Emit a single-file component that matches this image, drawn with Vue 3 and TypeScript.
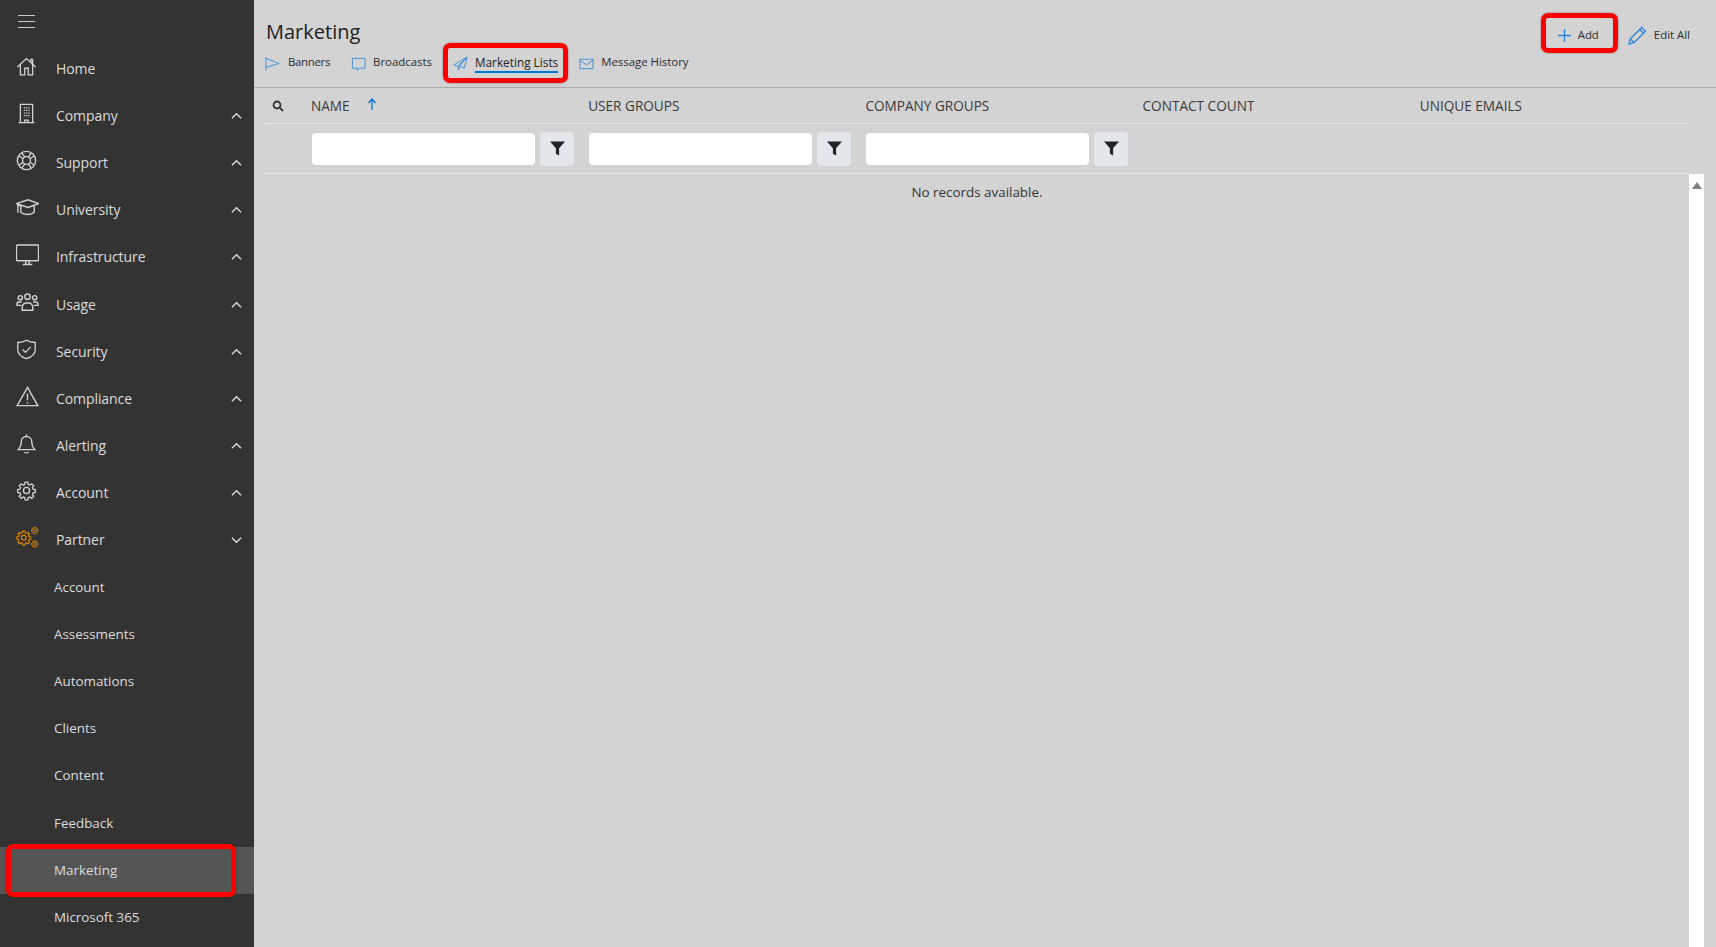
<script setup lang="ts">
interface NavItem {
  label: string
  icon: string
  open?: boolean
}
const nav: NavItem[] = [
  { label: 'Home', icon: 'home' },
  { label: 'Company', icon: 'company', open: false },
  { label: 'Support', icon: 'support', open: false },
  { label: 'University', icon: 'university', open: false },
  { label: 'Infrastructure', icon: 'monitor', open: false },
  { label: 'Usage', icon: 'users', open: false },
  { label: 'Security', icon: 'shield', open: false },
  { label: 'Compliance', icon: 'warning', open: false },
  { label: 'Alerting', icon: 'bell', open: false },
  { label: 'Account', icon: 'gear', open: false },
  { label: 'Partner', icon: 'partner', open: true },
]
const subItems = ['Account', 'Assessments', 'Automations', 'Clients', 'Content', 'Feedback', 'Marketing', 'Microsoft 365']
const columns = ['USER GROUPS', 'COMPANY GROUPS', 'CONTACT COUNT', 'UNIQUE EMAILS']
const gear = 'M10.4 2.5h3.2l.5 2.6 1.7.7 2.2-1.5 2.3 2.3-1.5 2.2.7 1.7 2.6.5v3.2l-2.6.5-.7 1.7 1.5 2.2-2.3 2.3-2.2-1.5-1.7.7-.5 2.6h-3.2l-.5-2.6-1.7-.7-2.2 1.5-2.3-2.3 1.5-2.2-.7-1.7-2.6-.5v-3.2l2.6-.5.7-1.7-1.5-2.2 2.3-2.3 2.2 1.5 1.7-.7z'
</script>

<template>
  <div class="app">
    <aside class="sidebar">
      <div class="burger"><span></span><span></span><span></span></div>
      <div v-for="item in nav" :key="item.label" class="nav-row">
        <span class="nav-icon">
          <svg v-if="item.icon === 'home'" viewBox="0 0 24 24"><path d="M1.500 12.500 12 3l10.500 9.500M5 10v11.500h5V14h4v7.500h5V10M17 7V4h2v4.800" /></svg>
          <svg v-else-if="item.icon === 'company'" viewBox="0 0 24 24"><path d="M5 22.500V1.500h14v21M3 22.500h18M10 22.500v-3h4v3" /><path class="dots" d="M9 5.500h6.500M9 8.500h6.500M9 11.500h6.500M9 14.500h6.500" /></svg>
          <svg v-else-if="item.icon === 'support'" viewBox="0 0 24 24"><circle cx="12" cy="12" r="10.500" /><circle cx="12" cy="12" r="4.500" /><path d="M3.200 6.500 8 10M6.500 3.200 10 8M20.800 6.500 16 10M17.500 3.200 14 8M3.200 17.500 8 14M6.500 20.800 10 16M20.800 17.500 16 14M17.500 20.800 14 16" /></svg>
          <svg v-else-if="item.icon === 'university'" viewBox="0 0 24 24" class="wide"><path d="M.5 8 12.500 4 23.500 8 12.500 12zM5 10.500v6.500c3 3 11 3 14 0v-6.500M2 9v8.500" /></svg>
          <svg v-else-if="item.icon === 'monitor'" viewBox="0 0 24 24" class="wide"><path d="M1.500 2h21a1 1 0 0 1 1 1v14.500a1 1 0 0 1-1 1h-21a1 1 0 0 1-1-1V3a1 1 0 0 1 1-1zM10.500 18.500l-.5 3.500M13.500 18.500l.5 3.500M7 22.500h10" /></svg>
          <svg v-else-if="item.icon === 'users'" viewBox="0 0 24 24" class="wide"><circle cx="12" cy="6" r="2.800" /><circle cx="4.500" cy="7" r="2.200" /><circle cx="19.500" cy="7" r="2.200" /><path d="M6.500 20v-3c0-2.500 2-4.500 4-4.500h3c2 0 4 2 4 4.500v3zM6 11.500H3c-1.200 0-2 1-2 2.500v1h4.500M18 11.500h3c1.200 0 2 1 2 2.500v1h-4.500" /></svg>
          <svg v-else-if="item.icon === 'shield'" viewBox="0 0 24 24"><path d="M12 1.500c3 2 6 2.500 10 2.500v8c0 5-4 8.500-10 10.500C6 20.500 2 17 2 12V4c4 0 7-.5 10-2.500zM7.500 12l3.300 3.300 6-6.300" /></svg>
          <svg v-else-if="item.icon === 'warning'" viewBox="0 0 24 24" class="wide"><path d="M12 2.500 22.800 21.500H1.200zM12 9v7M12 18v1.200" /></svg>
          <svg v-else-if="item.icon === 'bell'" viewBox="0 0 24 24"><path d="M12 1.500v2.500M12 4c-3.500 0-6 2.500-6 6 0 4.500-.5 6-3.500 9h19c-3-3-3.500-4.500-3.500-9 0-3.500-2.500-6-6-6zM9.500 22c1.200 1 3.800 1 5 0" /></svg>
          <svg v-else-if="item.icon === 'gear'" viewBox="0 0 24 24"><path :d="gear" /><circle cx="12" cy="12" r="3.500" /></svg>
          <svg v-else viewBox="0 0 24 24" class="wide orange">
            <g transform="translate(-.5 3.500) scale(.72)"><path :d="gear" /><circle cx="12" cy="12" r="3.500" /></g>
            <g class="tiny" transform="translate(15.500 .5) scale(.34)"><path :d="gear" /><circle cx="12" cy="12" r="3.500" /></g>
            <g class="tiny" transform="translate(15.500 14.500) scale(.34)"><path :d="gear" /><circle cx="12" cy="12" r="3.500" /></g>
          </svg>
        </span>
        <span class="nav-label">{{ item.label }}</span>
        <svg v-if="item.open !== undefined" class="chevron" viewBox="0 0 12 8">
          <path :d="item.open ? 'M1 1.500 6 6.500 11 1.500' : 'M1 6.500 6 1.500 11 6.500'" />
        </svg>
      </div>
      <div
        v-for="sub in subItems"
        :key="'sub-' + sub"
        class="sub-row"
        :class="{ active: sub === 'Marketing' }"
      >
        {{ sub }}
        <span v-if="sub === 'Marketing'" class="callout callout-nav"></span>
      </div>
    </aside>

    <main class="main">
      <header class="head">
        <div class="head-left">
          <h1 class="title">Marketing</h1>
          <nav class="tabs">
            <a class="tab first">
              <svg viewBox="0 0 16 16"><path d="M1 1.500v14M1 2.500l14 5.500-14 4" /></svg>
              <span>Banners</span>
            </a>
            <a class="tab">
              <svg viewBox="0 0 16 16"><path d="M1.500 2.500h13.500v10.500h-6l-2.500 2.200v-2.200H1.500z" /></svg>
              <span>Broadcasts</span>
            </a>
            <a class="tab current">
              <svg viewBox="0 0 16 16"><path d="M15 1 1 9.500l4 1.500zM15 1l-3 12-5-2.500zM15 1 5.500 11v4l2.500-3.800" /></svg>
              <span>Marketing Lists</span>
              <span class="callout callout-tab"></span>
            </a>
            <a class="tab">
              <svg viewBox="0 0 16 16"><path d="M1 3.500h14v10H1zM1 4.500l7 5 7-5" /></svg>
              <span>Message History</span>
            </a>
          </nav>
        </div>
        <div class="actions">
          <button class="action add" type="button">
            <svg viewBox="0 0 14 14"><path d="M7 0v14M0 7h14" /></svg>
            <span>Add</span>
            <span class="callout callout-add"></span>
          </button>
          <button class="action edit" type="button">
            <svg viewBox="0 0 18 18"><path d="M1 17l1.200-4.800L13 1.500l3.500 3.500L5.800 15.800zM2.200 12.200l3.600 3.600M11.200 3.300l3.500 3.500" /></svg>
            <span>Edit All</span>
          </button>
        </div>
      </header>

      <div class="grid">
        <div class="row head-row">
          <span class="search-cell">
            <svg viewBox="0 0 12 12"><circle cx="5" cy="5" r="3.500" /><path d="m7.800 7.800 3.200 3.200" /></svg>
          </span>
          <span class="name-cell">
            NAME
            <svg viewBox="0 0 10 12"><path d="M5 12V1.500M1.500 5 5 1l3.500 4" /></svg>
          </span>
          <span v-for="col in columns" :key="col">{{ col }}</span>
        </div>
        <div class="row filter-row">
          <span></span>
          <span v-for="n in 3" :key="n" class="filter">
            <input type="text" aria-label="filter" />
            <button type="button">
              <svg viewBox="0 0 14 14"><path d="M0 .5h14L8.500 6.700V13.500l-3-1.500V6.700z" /></svg>
            </button>
          </span>
        </div>
        <div class="body">
          <div class="empty">No records available.</div>
          <div class="scrollbar"><i></i></div>
        </div>
      </div>
    </main>
  </div>
</template>

<style scoped>
.app {
  display: flex;
  width: 1716px;
  height: 947px;
  overflow: hidden;
  background: #d3d3d3;
  font-family: "Open Sans", "Noto Sans", sans-serif;
}

.sidebar {
  flex: 0 0 254px;
  height: 947px;
  overflow: hidden;
  background: #333333;
  color: #dcdcdc;
  font-size: 14px;
}

.burger {
  height: 44.500px;
  padding: 15px 0 0 18px;
  box-sizing: border-box;
  display: flex;
  flex-direction: column;
  gap: 5px;
}

.burger span {
  display: block;
  width: 17px;
  height: 1px;
  background: #c8c8c8;
}

.nav-row {
  display: flex;
  align-items: center;
  height: 47.200px;
  padding-left: 16px;
  padding-right: 12px;
}

.nav-icon {
  flex: 0 0 40px;
  display: flex;
  margin-top: -4px;
}

.nav-icon svg {
  width: 21px;
  height: 21px;
  fill: none;
  stroke: #d2d2d2;
  stroke-width: 1.500;
}

.nav-icon svg.wide {
  width: 23px;
  height: 23px;
}

.nav-icon svg.orange {
  stroke: #f08c00;
}

.nav-icon .tiny {
  stroke-width: 2.600;
}

.nav-icon .dots {
  stroke-dasharray: 1.500 1;
}

.nav-label {
  flex: 1;
  letter-spacing: -0.08px;
}

.chevron {
  width: 11px;
  height: 8px;
  margin-top: 1px;
  fill: none;
  stroke: #dcdcdc;
  stroke-width: 1.500;
}

.sub-row {
  position: relative;
  height: 47.200px;
  line-height: 47.200px;
  padding-left: 54px;
  font-size: 13.400px;
}

.sub-row.active {
  background: #555555;
}

.callout {
  position: absolute;
  box-sizing: border-box;
  border: 5px solid #ff0000;
  border-radius: 7px;
  box-shadow: 0 0 2px rgba(60, 0, 0, 0.5);
  pointer-events: none;
}

.callout-nav {
  left: 6px;
  top: -3px;
  width: 230px;
  height: 53px;
}

.callout-tab {
  left: -10px;
  top: -9px;
  width: 125px;
  height: 40px;
}

.callout-add {
  left: -17px;
  top: -12px;
  width: 77px;
  height: 40px;
}

.main {
  flex: 1;
  min-width: 0;
  height: 947px;
  display: flex;
  flex-direction: column;
  color: #333;
}

.head {
  position: relative;
  flex: 0 0 88px;
  box-sizing: border-box;
  border-bottom: 1px solid #a9a9a9;
  padding: 17px 26px 0 11px;
  display: flex;
  justify-content: space-between;
}

.title {
  margin: 0 0 0 1px;
  font-size: 20px;
  line-height: 30px;
  font-weight: 500;
  color: #222;
}

.tabs {
  display: flex;
  gap: 21px;
  margin-top: 5px;
  font-size: 11.400px;
  line-height: 20px;
  color: #2c2c2c;
}

.tab {
  position: relative;
  display: flex;
  align-items: flex-start;
  gap: 7px;
}

.tab.first {
  gap: 8px;
  letter-spacing: -0.3px;
}

.tab svg {
  width: 15px;
  height: 15px;
  margin-top: 4px;
  fill: none;
  stroke: #3d8fd9;
  stroke-width: 1;
}

.tab.current span:not(.callout) {
  box-shadow: 0 2px 0 #0078d4;
  height: 19px;
}

.tab.current {
  color: #222;
  font-weight: 500;
  font-size: 11.800px;
}

.actions {
  display: flex;
  gap: 29px;
  padding-top: 8px;
  align-items: flex-start;
}

.action {
  position: relative;
  display: flex;
  align-items: center;
  gap: 7px;
  padding: 0;
  border: 0;
  background: none;
  font: inherit;
  font-size: 11.400px;
  line-height: 20px;
  color: #2c2c2c;
}

.action svg {
  fill: none;
  stroke: #2b86d9;
  stroke-width: 1.500;
}

.add svg {
  width: 13px;
  height: 13px;
}

.edit svg {
  width: 19px;
  height: 19px;
  stroke-width: 1.300;
}

.grid {
  flex: 1;
  min-height: 0;
  margin-left: 11px;
  margin-right: 12px;
  display: flex;
  flex-direction: column;
}

.row {
  display: grid;
  grid-template-columns: 46px repeat(5, 277.200px);
  align-items: center;
  margin-right: 14px;
  border-bottom: 1px solid #e6e6e6;
  box-sizing: border-box;
}

.head-row {
  height: 36px;
  font-size: 13.600px;
  color: #3a3a3a;
}

.search-cell svg {
  display: block;
  width: 12px;
  height: 12px;
  margin-left: 7px;
  fill: none;
  stroke: #333;
  stroke-width: 1.800;
}

.name-cell {
  display: flex;
  align-items: center;
  gap: 17px;
}

.name-cell svg {
  width: 10px;
  height: 12px;
  margin-top: -3px;
  fill: none;
  stroke: #0078d4;
  stroke-width: 1.300;
}

.filter-row {
  height: 50px;
}

.filter {
  display: flex;
  align-items: center;
  gap: 5px;
}

.filter input {
  width: 223px;
  height: 32px;
  margin-left: 1px;
  box-sizing: border-box;
  padding: 0 8px;
  border: 0;
  border-radius: 4px;
  background: #fff;
  font: inherit;
}

.filter button {
  width: 34px;
  height: 34px;
  padding: 0;
  border: 0;
  border-radius: 4px;
  background: #e3e6ea;
  display: flex;
  align-items: center;
  justify-content: center;
}

.filter svg {
  width: 15px;
  height: 15px;
  fill: #212529;
}

.body {
  flex: 1;
  min-height: 0;
  display: flex;
}

.empty {
  flex: 1;
  text-align: center;
  font-size: 13.400px;
  line-height: 36px;
  color: #333;
}

.scrollbar {
  flex: 0 0 15px;
  background: #fff;
  display: flex;
  justify-content: center;
  padding-top: 8px;
  box-sizing: border-box;
}

.scrollbar i {
  display: block;
  width: 0;
  height: 0;
  border-left: 5.500px solid transparent;
  border-right: 5.500px solid transparent;
  border-bottom: 7px solid #808080;
}
</style>
